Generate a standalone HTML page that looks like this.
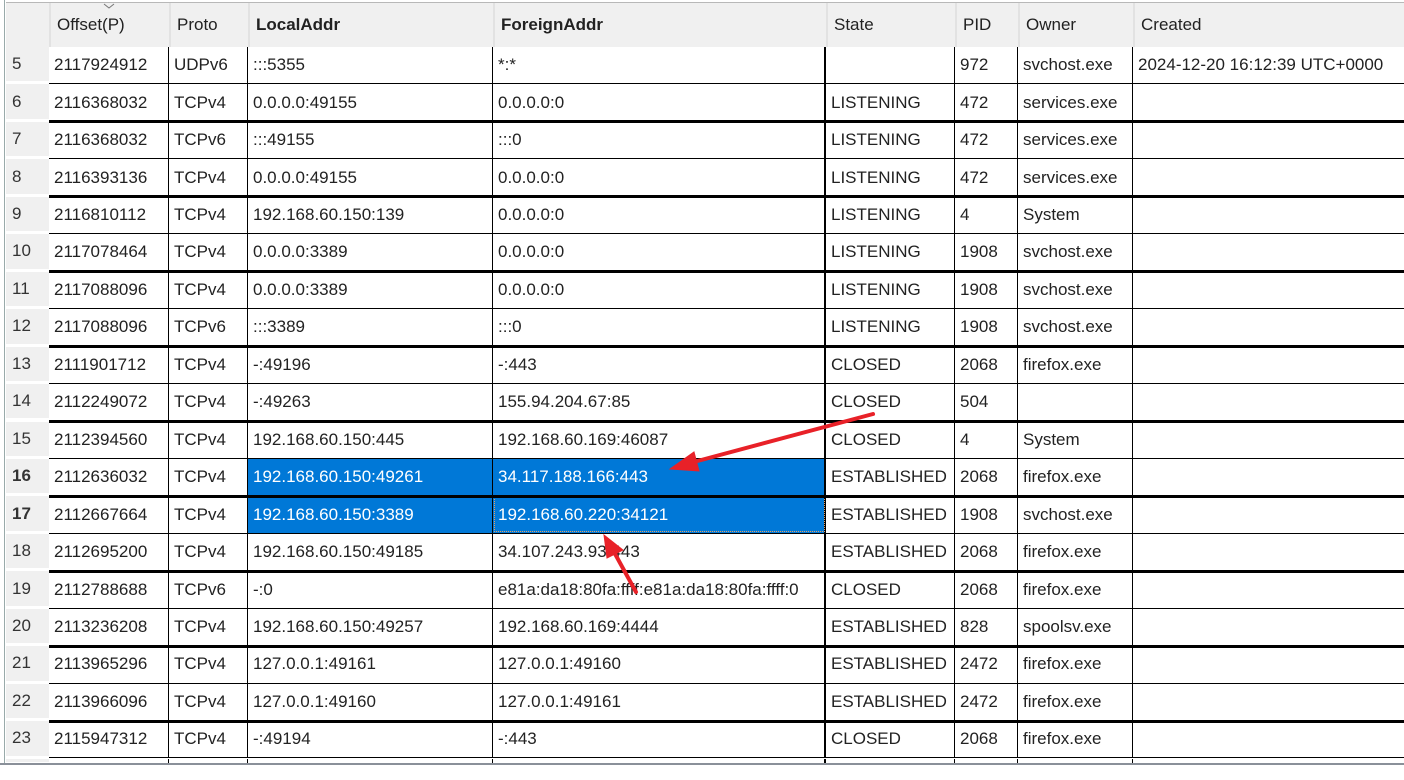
<!DOCTYPE html>
<html><head><meta charset="utf-8"><style>
body{margin:0;width:1404px;height:780px;background:#fff;overflow:hidden;position:relative;font-family:"Liberation Sans",sans-serif;font-size:17px;color:#222}
.hd{position:absolute;top:2px;left:6px;right:0;height:44px;background:#f0f0f0;border-top:1px solid #b8b8b8}
.hd span{position:absolute;top:0;height:44px;line-height:44px;padding-left:6px;box-sizing:border-box;border-left:2px solid #e2e2e2}
.r{position:absolute;left:6px;right:0;height:37.45px}
.r span{position:absolute;top:1px;bottom:0;display:flex;align-items:center;padding-left:5px;box-sizing:border-box;border-right:1px solid #000;white-space:nowrap}
.r .n{left:0;width:43px;background:#f0f0f0;border-right:none;border-bottom:2px solid #fff;padding-left:6px;color:#333}
.a{left:43px;width:120px}.b{left:163px;width:79px}.c{left:242px;width:245px}.d{left:487px;width:333px;border-right:2px solid #000!important}.e{left:820px;width:129px}.f{left:949px;width:63px}.g{left:1012px;width:115px}.h{left:1127px;right:0;border-right:none!important}
.r .s{background:#0078d7;color:#fff}
.hl{position:absolute;left:49px;right:0;background:#000}
</style></head><body>
<div style="position:absolute;left:4px;top:0;bottom:15px;width:1px;background:#9aa"></div>
<div class="hd">
<span style="left:0;width:43px;border-left:none"></span>
<span style="left:43px;width:120px">Offset(P)</span>
<span style="left:163px;width:79px">Proto</span>
<span style="left:242px;width:245px;font-weight:bold">LocalAddr</span>
<span style="left:487px;width:333px;font-weight:bold">ForeignAddr</span>
<span style="left:820px;width:129px">State</span>
<span style="left:949px;width:63px">PID</span>
<span style="left:1012px;width:115px">Owner</span>
<span style="left:1127px;right:0">Created</span>
</div>
<svg style="position:absolute;left:103px;top:2px" width="12" height="8"><path d="M1 2 L6 6 L11 2" fill="none" stroke="#777" stroke-width="1"/></svg>

<div class="r" style="top:46px"><span class="n">5</span><span class="a">2117924912</span><span class="b">UDPv6</span><span class="c">:::5355</span><span class="d">*:*</span><span class="e"></span><span class="f">972</span><span class="g">svchost.exe</span><span class="h">2024-12-20 16:12:39 UTC+0000</span></div>
<div class="r" style="top:83.45px"><span class="n">6</span><span class="a">2116368032</span><span class="b">TCPv4</span><span class="c">0.0.0.0:49155</span><span class="d">0.0.0.0:0</span><span class="e">LISTENING</span><span class="f">472</span><span class="g">services.exe</span><span class="h"></span></div>
<div class="r" style="top:120.9px"><span class="n">7</span><span class="a">2116368032</span><span class="b">TCPv6</span><span class="c">:::49155</span><span class="d">:::0</span><span class="e">LISTENING</span><span class="f">472</span><span class="g">services.exe</span><span class="h"></span></div>
<div class="r" style="top:158.35px"><span class="n">8</span><span class="a">2116393136</span><span class="b">TCPv4</span><span class="c">0.0.0.0:49155</span><span class="d">0.0.0.0:0</span><span class="e">LISTENING</span><span class="f">472</span><span class="g">services.exe</span><span class="h"></span></div>
<div class="r" style="top:195.8px"><span class="n">9</span><span class="a">2116810112</span><span class="b">TCPv4</span><span class="c">192.168.60.150:139</span><span class="d">0.0.0.0:0</span><span class="e">LISTENING</span><span class="f">4</span><span class="g">System</span><span class="h"></span></div>
<div class="r" style="top:233.25px"><span class="n">10</span><span class="a">2117078464</span><span class="b">TCPv4</span><span class="c">0.0.0.0:3389</span><span class="d">0.0.0.0:0</span><span class="e">LISTENING</span><span class="f">1908</span><span class="g">svchost.exe</span><span class="h"></span></div>
<div class="r" style="top:270.7px"><span class="n">11</span><span class="a">2117088096</span><span class="b">TCPv4</span><span class="c">0.0.0.0:3389</span><span class="d">0.0.0.0:0</span><span class="e">LISTENING</span><span class="f">1908</span><span class="g">svchost.exe</span><span class="h"></span></div>
<div class="r" style="top:308.15px"><span class="n">12</span><span class="a">2117088096</span><span class="b">TCPv6</span><span class="c">:::3389</span><span class="d">:::0</span><span class="e">LISTENING</span><span class="f">1908</span><span class="g">svchost.exe</span><span class="h"></span></div>
<div class="r" style="top:345.6px"><span class="n">13</span><span class="a">2111901712</span><span class="b">TCPv4</span><span class="c">-:49196</span><span class="d">-:443</span><span class="e">CLOSED</span><span class="f">2068</span><span class="g">firefox.exe</span><span class="h"></span></div>
<div class="r" style="top:383.05px"><span class="n">14</span><span class="a">2112249072</span><span class="b">TCPv4</span><span class="c">-:49263</span><span class="d">155.94.204.67:85</span><span class="e">CLOSED</span><span class="f">504</span><span class="g"></span><span class="h"></span></div>
<div class="r" style="top:420.5px"><span class="n">15</span><span class="a">2112394560</span><span class="b">TCPv4</span><span class="c">192.168.60.150:445</span><span class="d">192.168.60.169:46087</span><span class="e">CLOSED</span><span class="f">4</span><span class="g">System</span><span class="h"></span></div>
<div class="r" style="top:457.95px"><span class="n" style="font-weight:bold">16</span><span class="a">2112636032</span><span class="b">TCPv4</span><span class="c s">192.168.60.150:49261</span><span class="d s">34.117.188.166:443</span><span class="e">ESTABLISHED</span><span class="f">2068</span><span class="g">firefox.exe</span><span class="h"></span></div>
<div class="r" style="top:495.4px"><span class="n" style="font-weight:bold">17</span><span class="a">2112667664</span><span class="b">TCPv4</span><span class="c s">192.168.60.150:3389</span><span class="d s" style="outline:1px dotted #e8a060;outline-offset:-2px">192.168.60.220:34121</span><span class="e">ESTABLISHED</span><span class="f">1908</span><span class="g">svchost.exe</span><span class="h"></span></div>
<div class="r" style="top:532.85px"><span class="n">18</span><span class="a">2112695200</span><span class="b">TCPv4</span><span class="c">192.168.60.150:49185</span><span class="d">34.107.243.93:443</span><span class="e">ESTABLISHED</span><span class="f">2068</span><span class="g">firefox.exe</span><span class="h"></span></div>
<div class="r" style="top:570.3px"><span class="n">19</span><span class="a">2112788688</span><span class="b">TCPv6</span><span class="c">-:0</span><span class="d">e81a:da18:80fa:ffff:e81a:da18:80fa:ffff:0</span><span class="e">CLOSED</span><span class="f">2068</span><span class="g">firefox.exe</span><span class="h"></span></div>
<div class="r" style="top:607.75px"><span class="n">20</span><span class="a">2113236208</span><span class="b">TCPv4</span><span class="c">192.168.60.150:49257</span><span class="d">192.168.60.169:4444</span><span class="e">ESTABLISHED</span><span class="f">828</span><span class="g">spoolsv.exe</span><span class="h"></span></div>
<div class="r" style="top:645.2px"><span class="n">21</span><span class="a">2113965296</span><span class="b">TCPv4</span><span class="c">127.0.0.1:49161</span><span class="d">127.0.0.1:49160</span><span class="e">ESTABLISHED</span><span class="f">2472</span><span class="g">firefox.exe</span><span class="h"></span></div>
<div class="r" style="top:682.65px"><span class="n">22</span><span class="a">2113966096</span><span class="b">TCPv4</span><span class="c">127.0.0.1:49160</span><span class="d">127.0.0.1:49161</span><span class="e">ESTABLISHED</span><span class="f">2472</span><span class="g">firefox.exe</span><span class="h"></span></div>
<div class="r" style="top:720.1px"><span class="n">23</span><span class="a">2115947312</span><span class="b">TCPv4</span><span class="c">-:49194</span><span class="d">-:443</span><span class="e">CLOSED</span><span class="f">2068</span><span class="g">firefox.exe</span><span class="h"></span></div>
<div class="r" style="top:757.55px;height:6px"><span class="n"></span><span class="a"></span><span class="b"></span><span class="c"></span><span class="d"></span><span class="e"></span><span class="f"></span><span class="g"></span><span class="h"></span></div>

<div class="hl" style="top:82.5px;height:1px"></div>
<div class="hl" style="top:119.5px;height:3px"></div>
<div class="hl" style="top:157.5px;height:1px"></div>
<div class="hl" style="top:194.5px;height:3px"></div>
<div class="hl" style="top:232.5px;height:1px"></div>
<div class="hl" style="top:269.5px;height:3px"></div>
<div class="hl" style="top:307.5px;height:1px"></div>
<div class="hl" style="top:344.5px;height:3px"></div>
<div class="hl" style="top:382.5px;height:1px"></div>
<div class="hl" style="top:419.5px;height:3px"></div>
<div class="hl" style="top:457.5px;height:1px"></div>
<div class="hl" style="top:494.5px;height:3px"></div>
<div class="hl" style="top:532.5px;height:1px"></div>
<div class="hl" style="top:569.5px;height:3px"></div>
<div class="hl" style="top:607.5px;height:1px"></div>
<div class="hl" style="top:644.5px;height:3px"></div>
<div class="hl" style="top:682.5px;height:1px"></div>
<div class="hl" style="top:719.5px;height:3px"></div>
<div class="hl" style="top:757px;height:1px"></div>
<div style="position:absolute;left:0;right:0;top:763px;height:2px;background:#8a9099"></div>
<div style="position:absolute;left:0;right:0;top:765px;bottom:0;background:#fff"></div>

<svg style="position:absolute;left:0;top:0" width="1404" height="780">
<g stroke="#e82128" stroke-width="4" fill="#e82128" stroke-linecap="round">
<line x1="873" y1="414" x2="690" y2="463"/>
<polygon points="670,469 694,452 699,471" stroke-width="1"/>
<line x1="636" y1="592" x2="614" y2="552"/>
<polygon points="604,535 623,550 607,558" stroke-width="1"/>
</g>
</svg>
</body></html>
